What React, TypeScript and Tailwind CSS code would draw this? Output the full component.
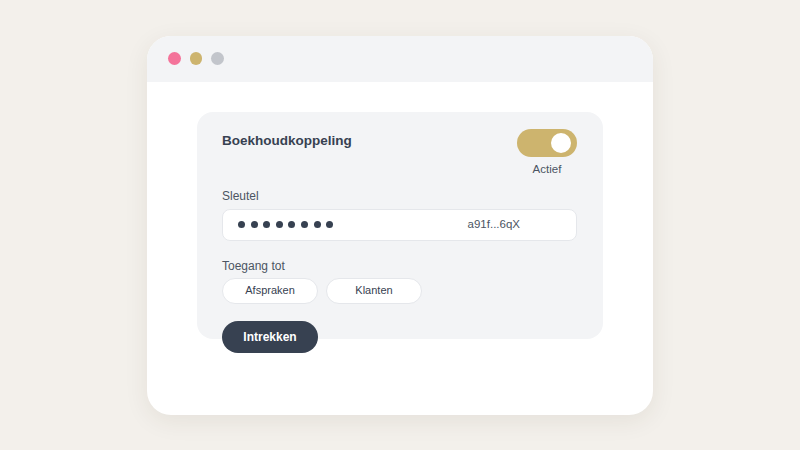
export default function App() {
  const dots = Array.from({ length: 8 })

  return (
    <div
      className="w-[800px] h-[450px] bg-[#f3f0eb] flex items-center justify-center"
      style={{ fontFamily: '"Liberation Sans", Arial, sans-serif' }}
    >
      {/* Window */}
      <div className="w-[506px] h-[379px] bg-white rounded-[24px] overflow-hidden shadow-[0_6px_24px_rgba(60,50,30,0.08)] flex flex-col">
        {/* Title bar */}
        <div className="h-[46px] shrink-0 bg-[#f3f4f6] flex items-center gap-[9px] pl-[21px]">
          <span className="w-[12.5px] h-[12.5px] rounded-full bg-[#f4739a]" />
          <span className="w-[12.5px] h-[12.5px] rounded-full bg-[#cdb46e]" />
          <span className="w-[12.5px] h-[12.5px] rounded-full bg-[#c2c5cb]" />
        </div>

        {/* Content */}
        <div className="pt-[30px] px-[50px]">
          <div className="h-[227px] bg-[#f3f4f6] rounded-[16px] pt-[16px] px-[25px] pr-[26px]">
            {/* Header */}
            <div className="flex items-start justify-between">
              <h2 className="mt-[5px] text-[13.5px] leading-4 font-bold text-[#374151]">Boekhoudkoppeling</h2>
              <div className="flex flex-col items-center pt-px">
                <button className="w-[60px] h-[28px] rounded-full bg-[#cdb46e] flex items-center justify-end pr-[6px]">
                  <span className="w-[20px] h-[20px] rounded-full bg-white" />
                </button>
                <span className="mt-1 text-[11.5px] leading-4 text-[#4b5563]">Actief</span>
              </div>
            </div>

            {/* Key */}
            <p className="mt-[11px] text-[12px] leading-4 text-[#4b5563]">Sleutel</p>
            <div className="mt-[5px] h-[32px] bg-white rounded-[8px] border border-[#e5e7eb] flex items-center pl-[15px]">
              <div className="flex items-center gap-[5.6px]">
                {dots.map((_, i) => (
                  <span key={i} className="w-[7px] h-[7px] rounded-full bg-[#374151]" />
                ))}
              </div>
              <span className="ml-auto mr-[56px] text-[11.5px] text-[#4b5563]">a91f...6qX</span>
            </div>

            {/* Access */}
            <p className="mt-[17px] text-[12px] leading-4 text-[#4b5563]">Toegang tot</p>
            <div className="mt-1 flex gap-2">
              <span className="w-[96px] h-[26px] rounded-full bg-white border border-[#e5e7eb] flex items-center justify-center text-[11px] text-[#374151]">
                Afspraken
              </span>
              <span className="w-[96px] h-[26px] rounded-full bg-white border border-[#e5e7eb] flex items-center justify-center text-[11px] text-[#374151]">
                Klanten
              </span>
            </div>

            <button className="mt-[17px] w-[96px] h-[32px] rounded-full bg-[#374151] text-white text-[12px] font-bold flex items-center justify-center">
              Intrekken
            </button>
          </div>
        </div>
      </div>
    </div>
  )
}
